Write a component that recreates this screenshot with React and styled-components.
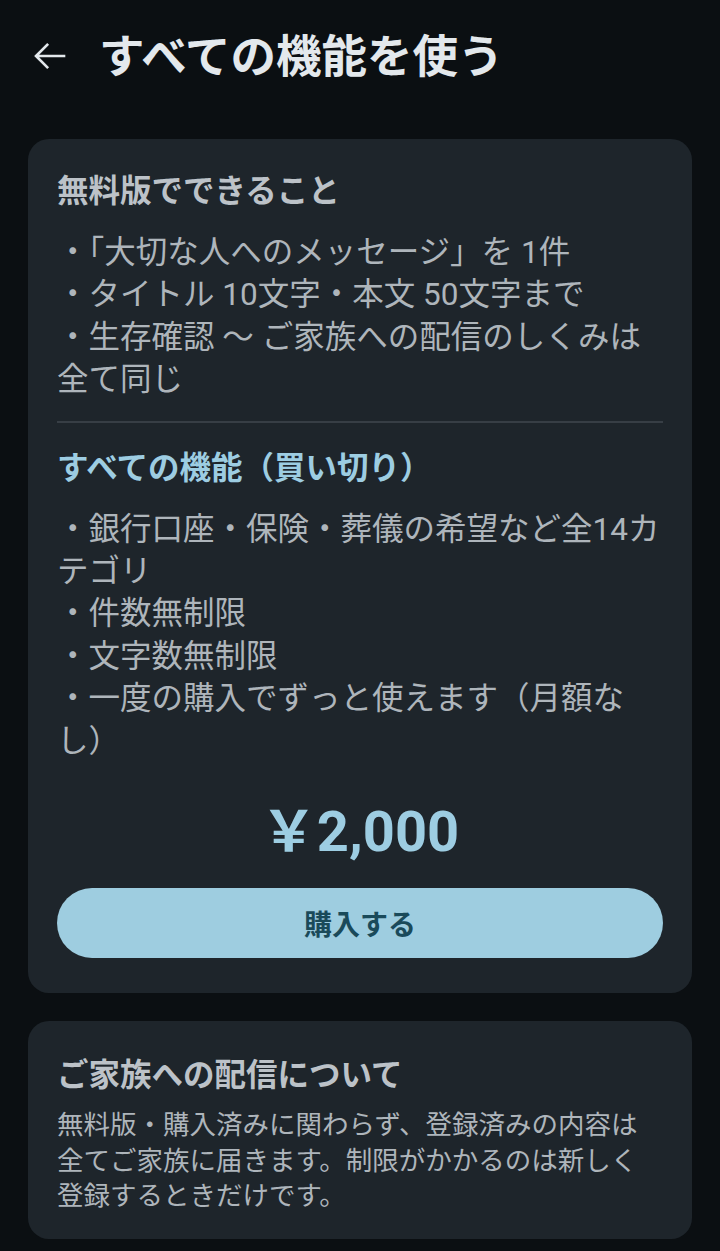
import React from 'react';
import styled, { createGlobalStyle } from 'styled-components';

const GlobalStyle = createGlobalStyle`
    body {
        margin: 0;
        background: #0b0f12;
        font-family: Roboto, 'Noto Sans CJK JP', sans-serif;
    }
`;

const freeItems = [
    '・「大切な人へのメッセージ」を 1件',
    '・タイトル 10文字・本文 50文字まで',
    '・生存確認 〜 ご家族への配信のしくみは全て同じ',
];

const fullItems = [
    '・銀行口座・保険・葬儀の希望など全14カテゴリ',
    '・件数無制限',
    '・文字数無制限',
    '・一度の購入でずっと使えます（月額なし）',
];

const BackIcon = () => (
    <svg width='42' height='42' viewBox='0 0 24 24' fill='none'>
        <path
            d='M20 12H4.6M10.4 5.6 4 12l6.4 6.4'
            stroke='#e3e8ec'
            strokeWidth='1.5'
            strokeLinecap='square'
        />
    </svg>
);

const App = () => {
    return (
        <>
            <GlobalStyle />
            <Page>
                <Header>
                    <BackButton type='button' aria-label='戻る'>
                        <BackIcon />
                    </BackButton>
                    <Title>すべての機能を使う</Title>
                </Header>

                <Card>
                    <SectionTitle>無料版でできること</SectionTitle>
                    <List>
                        {freeItems.map((item) => (
                            <li key={item}>{item}</li>
                        ))}
                    </List>
                    <Divider />
                    <SectionTitle $accent>すべての機能（買い切り）</SectionTitle>
                    <List>
                        {fullItems.map((item) => (
                            <li key={item}>{item}</li>
                        ))}
                    </List>
                    <Price>￥2,000</Price>
                    <BuyButton type='button'>購入する</BuyButton>
                </Card>

                <InfoCard>
                    <SectionTitle>ご家族への配信について</SectionTitle>
                    <Note>
                        無料版・購入済みに関わらず、登録済みの内容は全てご家族に届きます。制限がかかるのは新しく登録するときだけです。
                    </Note>
                </InfoCard>
            </Page>
        </>
    );
};

const Page = styled.main`
    padding: 0 28px 28px;
`;

const Header = styled.header`
    display: flex;
    align-items: center;
    height: 112px;
    margin-bottom: 27px;
`;

const BackButton = styled.button`
    display: flex;
    align-items: center;
    justify-content: center;
    width: 42px;
    height: 42px;
    margin-left: 1px;
    padding: 0;
    border: none;
    background: transparent;
    cursor: pointer;
`;

const Title = styled.h1`
    margin: 4px 0 0 28px;
    font-size: 45.5px;
    font-weight: 700;
    line-height: 60px;
    color: #e3e8ec;
`;

const Card = styled.section`
    background: #1e252b;
    border-radius: 21px;
    padding: 31px 29px 35px;
`;

const InfoCard = styled(Card)`
    margin-top: 28px;
    padding: 33px 29px 25px;
`;

const SectionTitle = styled.h2`
    margin: 0;
    font-size: 31.5px;
    font-weight: 700;
    line-height: 44px;
    color: ${(props) => (props.$accent ? '#9dcde2' : '#bcc2c8')};
`;

const List = styled.ul`
    margin: 18px 0 0;
    padding: 0;
    list-style: none;
    font-size: 31.5px;
    line-height: 42.4px;
    color: #aeb5bb;
`;

const Divider = styled.hr`
    margin: 19px 0 24px;
    border: none;
    height: 2px;
    background: #373e45;
`;

const Price = styled.div`
    margin-top: 36px;
    text-align: center;
    font-size: 56px;
    font-weight: 700;
    line-height: 66px;
    color: #9dcde2;
`;

const BuyButton = styled.button`
    display: block;
    width: 100%;
    height: 70px;
    margin-top: 23px;
    border: none;
    border-radius: 35px;
    background: #9ecde0;
    color: #1a4a5a;
    font-family: inherit;
    font-size: 28px;
    font-weight: 700;
    cursor: pointer;
`;

const Note = styled.p`
    margin: 9px 0 0;
    font-size: 26.5px;
    line-height: 35.5px;
    color: #aeb5bb;
`;

export default App;
